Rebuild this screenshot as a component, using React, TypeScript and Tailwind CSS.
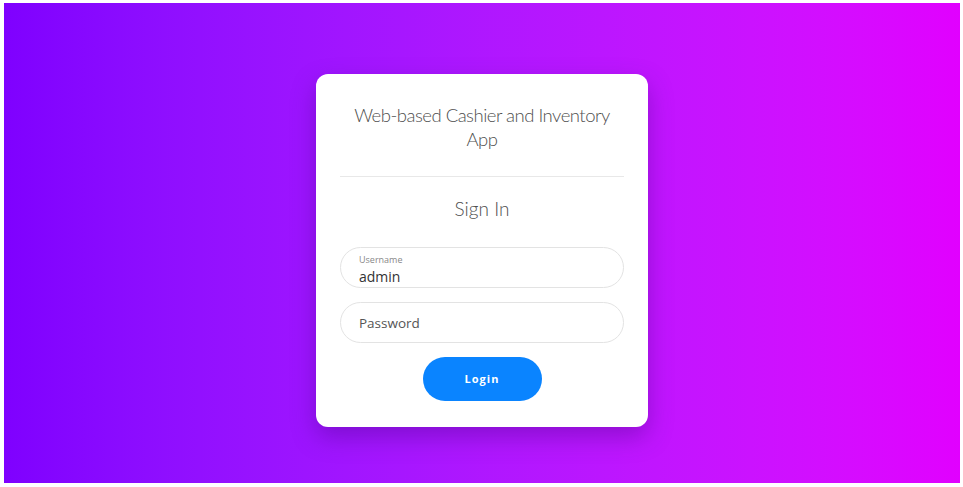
import React from "react";

export default function App() {
  return (
    <div className="w-[963px] h-[487px] bg-white pt-[3px] pl-[4px] pr-[3px] pb-[4px]" style={{ fontFamily: '"Open Sans", "Noto Sans", sans-serif' }}>
      <div className="w-full h-full bg-gradient-to-r from-[#7f00ff] to-[#e100ff] flex flex-col items-center pt-[71px]">
        <div className="w-[332px] h-[353px] bg-white rounded-[12px] shadow-[0_10px_25px_rgba(60,0,120,0.35)] px-[24px] pt-[29px] flex flex-col">
          <h1 className="text-center text-[18.5px] leading-[24px] font-light tracking-[-0.5px] text-[#4f4f4f]" style={{ fontFamily: 'Lato, "Open Sans", sans-serif' }}>
            Web-based Cashier and Inventory App
          </h1>
          <div className="mt-[25px] h-px bg-[#e8e8e8]" />
          <h2 className="mt-[20px] text-center text-[19px] leading-[24px] font-light text-[#4f4f4f]" style={{ fontFamily: 'Lato, "Open Sans", sans-serif' }}>Sign In</h2>
          <div className="mt-[26px] h-[41px] rounded-full border border-[#e3e3e3] px-[18px] pt-[3px] flex flex-col justify-center">
            <span className="text-[9px] leading-[14px] text-[#888]">Username</span>
            <span className="text-[14px] leading-[19px] text-[#333]">admin</span>
          </div>
          <div className="mt-[14px] h-[41px] rounded-full border border-[#e3e3e3] px-[18px] flex items-center">
            <span className="text-[13.5px] text-[#555] mt-[1px]">Password</span>
          </div>
          <div className="mt-[14px] flex justify-center">
            <button className="w-[119px] h-[44px] rounded-full bg-[#0a84ff] text-white text-[11px] font-bold tracking-[1px]">
              Login
            </button>
          </div>
        </div>
      </div>
    </div>
  );
}
